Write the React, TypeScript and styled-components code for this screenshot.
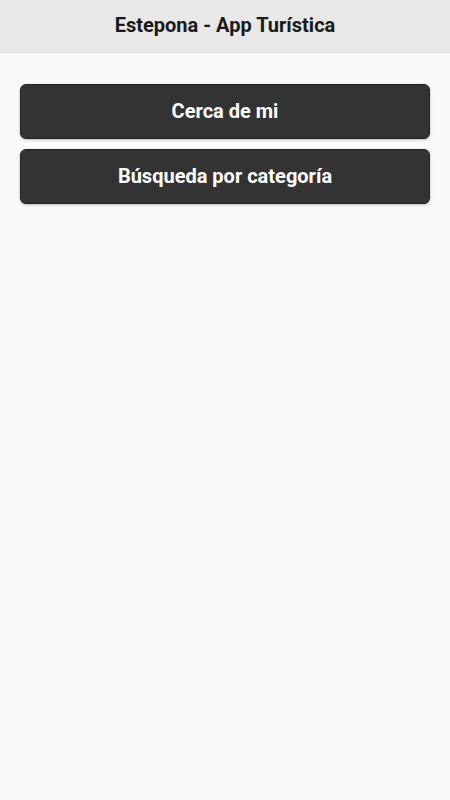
import { createGlobalStyle, styled } from "styled-components"

const Global = createGlobalStyle`
    html, body {
        margin: 0;
        padding: 0;
        background: #fafafa;
        font-family: Roboto, "Liberation Sans", sans-serif;
    }
`

const Page = styled.div`
    display: flex;
    flex-direction: column;
    min-height: 800px;
    background: #fafafa;
`

const Header = styled.header`
    display: flex;
    align-items: center;
    justify-content: center;
    height: 53px;
    padding-bottom: 2px;
    background: #e8e8e8;
    border-bottom: 1px solid #dedede;
    box-sizing: border-box;

    h1 {
        margin: 0;
        font-size: 20px;
        font-weight: 700;
        color: #1a1a1a;
    }
`

const Menu = styled.nav`
    display: flex;
    flex-direction: column;
    gap: 10px;
    padding: 31px 20px 0;
`

const MenuButton = styled.button`
    height: 55px;
    padding: 0 0 2px;
    border: 1px solid #222;
    border-radius: 6px;
    background: #333333;
    box-shadow: 0 1px 3px rgba(0, 0, 0, 0.25);
    color: #fff;
    font-family: Roboto, "Liberation Sans", sans-serif;
    font-size: 20px;
    font-weight: 700;
    cursor: pointer;
`

export default () => {
    return (
        <Page>
            <Global />
            <Header>
                <h1>Estepona - App Turística</h1>
            </Header>
            <Menu>
                <MenuButton>Cerca de mi</MenuButton>
                <MenuButton>Búsqueda por categoría</MenuButton>
            </Menu>
        </Page>
    )
}
